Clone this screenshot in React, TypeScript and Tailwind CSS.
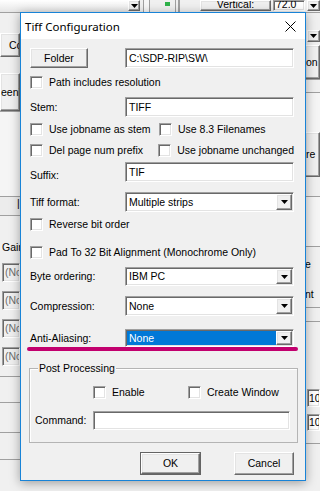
import type { ReactNode } from "react";

const sunken =
  "border border-t-[#a0a0a0] border-l-[#a0a0a0] border-r-white border-b-white shadow-[inset_1px_1px_0_#696969,inset_-1px_-1px_0_#e3e3e3]";
const raised =
  "border border-t-white border-l-white border-r-[#696969] border-b-[#696969] shadow-[inset_-1px_-1px_0_#a0a0a0,inset_1px_1px_0_#e3e3e3] bg-[#f0f0f0]";

function Arrow() {
  return (
    <svg width="7" height="4" viewBox="0 0 7 4">
      <path d="M0 0h7L3.5 4z" fill="#000" />
    </svg>
  );
}

function CheckBox({ label }: { label: string }) {
  return (
    <div className="flex h-[13px] items-center gap-[6px] whitespace-nowrap">
      <span className={`h-[13px] w-[13px] shrink-0 bg-white ${sunken}`} />
      <span>{label}</span>
    </div>
  );
}

function TextBox({ value, className = "" }: { value?: string; className?: string }) {
  return (
    <div className={`flex items-center bg-white pl-[3px] ${sunken} ${className}`}>{value}</div>
  );
}

function Select({ value, selected }: { value: string; selected?: boolean }) {
  return (
    <div className={`flex flex-1 items-stretch bg-white p-[1px] ${sunken}`}>
      {selected ? (
        <div className="flex flex-1 items-center bg-[#0078d7] pl-[2px] text-white">{value}</div>
      ) : (
        <div className="flex flex-1 items-center pl-[2px]">{value}</div>
      )}
      <div className={`flex w-[16px] items-center justify-center ${raised}`}>
        <Arrow />
      </div>
    </div>
  );
}

function Field({ label, children, h, mt, labelClass = "" }: { label: string; children: ReactNode; h: string; mt: string; labelClass?: string }) {
  return (
    <div className={`flex ${h} ${mt}`}>
      <div className={`flex w-[95px] shrink-0 items-center whitespace-nowrap ${labelClass}`}>{label}</div>
      {children}
    </div>
  );
}

function Button({ label, def, className = "" }: { label: string; def?: boolean; className?: string }) {
  if (def) {
    return (
      <div className={`border border-[#646464] ${className}`}>
        <div className={`flex h-full items-center justify-center ${raised}`}>{label}</div>
      </div>
    );
  }
  return <div className={`flex items-center justify-center ${raised} ${className}`}>{label}</div>;
}

function Background() {
  return (
    <div className="flex h-full flex-col">
      {/* top strip of the window behind */}
      <div className="flex h-[13px] shrink-0 border-b border-[#a0a0a0]">
        <div className="w-[128px] bg-gradient-to-b from-white to-[#e6e6e6]" />
        <div className={`flex h-[11px] w-[12px] items-center justify-center ${raised}`}>
          <Arrow />
        </div>
        <div className="ml-[3px] w-[7px] border-x border-[#a0a0a0] bg-[#f7f7f7]" />
        <div className="ml-[10px] flex w-[16px] items-start justify-center border-r border-[#a0a0a0] pt-[2px]">
          <span className="h-[4px] w-[5px] bg-[#2fb24a]" />
        </div>
        <div className="ml-[2px] w-[2px] border-x border-[#a0a0a0]" />
        <div className={`ml-[20px] flex h-[11px] w-[71px] items-end justify-center overflow-hidden leading-[11px] ${raised}`}>
          Vertical:
        </div>
        <div className={`ml-[2px] flex h-[11px] w-[32px] items-end overflow-hidden bg-white pl-[2px] leading-[11px] ${sunken}`}>
          72.0
        </div>
        <div className={`ml-[2px] flex h-[11px] flex-1 items-center justify-center ${raised}`}>
          <Arrow />
        </div>
      </div>
      <div className="flex flex-1 justify-between">
        {/* left edge */}
        <div className="flex w-[20px] flex-col overflow-hidden whitespace-nowrap">
          <div className={`mt-[20px] flex h-[24px] items-center overflow-hidden pl-[8px] ${raised}`}>Convert</div>
          <div className={`mt-[16px] flex h-[38px] items-center overflow-hidden ${raised}`}>eening</div>
          <div className="h-[85px] border-t border-[#a0a0a0] bg-[#f5f5f5]" />
          <div className="h-[20px] border-y border-[#a0a0a0] bg-[#ececec] pl-[17px]">|</div>
          <div className="mt-[25px] h-[13px] overflow-hidden pl-[2px]">Gain</div>
          {[0, 1, 2, 3].map((i) => (
            <div key={i} className={`ml-[2px] mt-[9px] flex h-[19px] items-center overflow-hidden pl-[2px] text-[#6d6d6d] ${sunken} bg-[#f0f0f0]`}>
              (No
            </div>
          ))}
          <div className="mt-[10px] h-[26px] border-t border-[#a0a0a0]" />
          <div className="h-[30px] border-t border-[#a0a0a0]" />
          <div className="h-[27px] border-t border-[#a0a0a0]" />
          <div className="flex-1 border-t border-[#a0a0a0]" />
        </div>
        {/* right edge */}
        <div className="flex w-[15px] flex-col overflow-hidden whitespace-nowrap">
          <div className={`ml-[2px] mt-[17px] flex h-[12px] items-center justify-center ${raised}`}>
            <Arrow />
          </div>
          <div className={`mt-[3px] flex h-[34px] items-center ${raised}`}>on</div>
          <div className="h-[13px] border-t border-[#a0a0a0]" />
          <div className="h-[40px] border-t border-[#a0a0a0] bg-[#f5f5f5]" />
          <div className={`flex h-[45px] items-center ${raised}`}>re</div>
          <div className="h-[20px] border-b border-[#a0a0a0]" />
          <div className="h-[50px] border-b border-[#a0a0a0] bg-[#f5f5f5]" />
          <div className="flex h-[34px] items-center">e</div>
          <div className="flex h-[26px] items-center">nt</div>
          <div className="h-[14px] border-t border-[#a0a0a0]" />
          <div className="h-[68px] border-t border-[#a0a0a0]" />
          <div className={`ml-[2px] flex h-[18px] items-center overflow-hidden bg-white pl-[1px] ${sunken}`}>100</div>
          <div className={`ml-[2px] mt-[7px] flex h-[17px] items-center overflow-hidden bg-white pl-[1px] ${sunken}`}>100</div>
          <div className="mt-[12px] flex-1 border-t border-[#a0a0a0]" />
        </div>
      </div>
    </div>
  );
}

export default function App() {
  return (
    <div className="relative h-[491px] w-[320px] overflow-hidden bg-[#f0f0f0] font-['Liberation_Sans',Arial,sans-serif] text-[10.5px] leading-[13px] text-black">
      <Background />

      {/* dialog window */}
      <div className="absolute left-[20px] top-[12px] flex h-[469px] w-[286px] flex-col border border-[#1883d7] bg-[#f0f0f0] shadow-[0_2px_10px_rgba(0,0,0,0.35)]">
        <div className="flex h-[26px] shrink-0 items-center justify-between bg-white pl-[4px] pr-[9px] font-['Noto_Sans',sans-serif] text-[11.5px]">
          <span>Tiff Configuration</span>
          <svg width="11" height="11" viewBox="0 0 11 11">
            <path d="M0.5 0.5l10 10M10.5 0.5l-10 10" stroke="#000" strokeWidth="1" />
          </svg>
        </div>

        <div className="flex flex-col pl-[9px] pr-[11px]">
          <div className="mt-[9px] flex h-[20px] items-stretch">
            <Button label="Folder" className="w-[58px]" />
            <TextBox value="C:\SDP-RIP\SW\" className="ml-[37px] flex-1" />
          </div>

          <div className="mt-[8px]">
            <CheckBox label="Path includes resolution" />
          </div>

          <Field label="Stem:" h="h-[20px]" mt="mt-[8px]">
            <TextBox value="TIFF" className="flex-1" />
          </Field>

          <div className="mt-[6px] flex">
            <div className="w-[129px]">
              <CheckBox label="Use jobname as stem" />
            </div>
            <CheckBox label="Use 8.3 Filenames" />
          </div>
          <div className="mt-[8px] flex">
            <div className="w-[129px]">
              <CheckBox label="Del page num prefix" />
            </div>
            <CheckBox label="Use jobname unchanged" />
          </div>

          <Field label="Suffix:" h="h-[20px]" mt="mt-[5px]" labelClass="items-end">
            <TextBox value="TIF" className="flex-1" />
          </Field>

          <Field label="Tiff format:" h="h-[20px]" mt="mt-[10px]">
            <Select value="Multiple strips" />
          </Field>

          <div className="mt-[6px]">
            <CheckBox label="Reverse bit order" />
          </div>
          <div className="mt-[15px]">
            <CheckBox label="Pad To 32 Bit Alignment (Monochrome Only)" />
          </div>

          <Field label="Byte ordering:" h="h-[19px]" mt="mt-[8px]">
            <Select value="IBM PC" />
          </Field>
          <Field label="Compression:" h="h-[20px]" mt="mt-[10px]">
            <Select value="None" />
          </Field>
          <Field label="Anti-Aliasing:" h="h-[18px]" mt="mt-[13px]">
            <Select value="None" selected />
          </Field>
        </div>

        {/* hand-drawn highlight stroke */}
        <div className="ml-[6px] h-[4px] w-[271px] rounded-full bg-[#c2006e]" />

        <div className="relative ml-[8px] mt-[17px] h-[75px] w-[269px] border border-[#b4b4b4] shadow-[inset_1px_1px_0_#fff]">
          <span className="absolute -top-[7px] left-[8px] bg-[#f0f0f0] px-[1px]">Post Processing</span>
          <div className="ml-[63px] mt-[17px] flex">
            <div className="w-[95px]">
              <CheckBox label="Enable" />
            </div>
            <CheckBox label="Create Window" />
          </div>
          <div className="mt-[12px] flex h-[19px] items-center pl-[5px]">
            <span className="w-[58px]">Command:</span>
            <TextBox className="h-full w-[197px]" />
          </div>
        </div>

        <div className="mt-[9px] flex h-[23px] pr-[11px]">
          <Button label="OK" def className="ml-auto w-[61px]" />
          <Button label="Cancel" className="ml-[33px] w-[60px]" />
        </div>
      </div>
    </div>
  );
}
